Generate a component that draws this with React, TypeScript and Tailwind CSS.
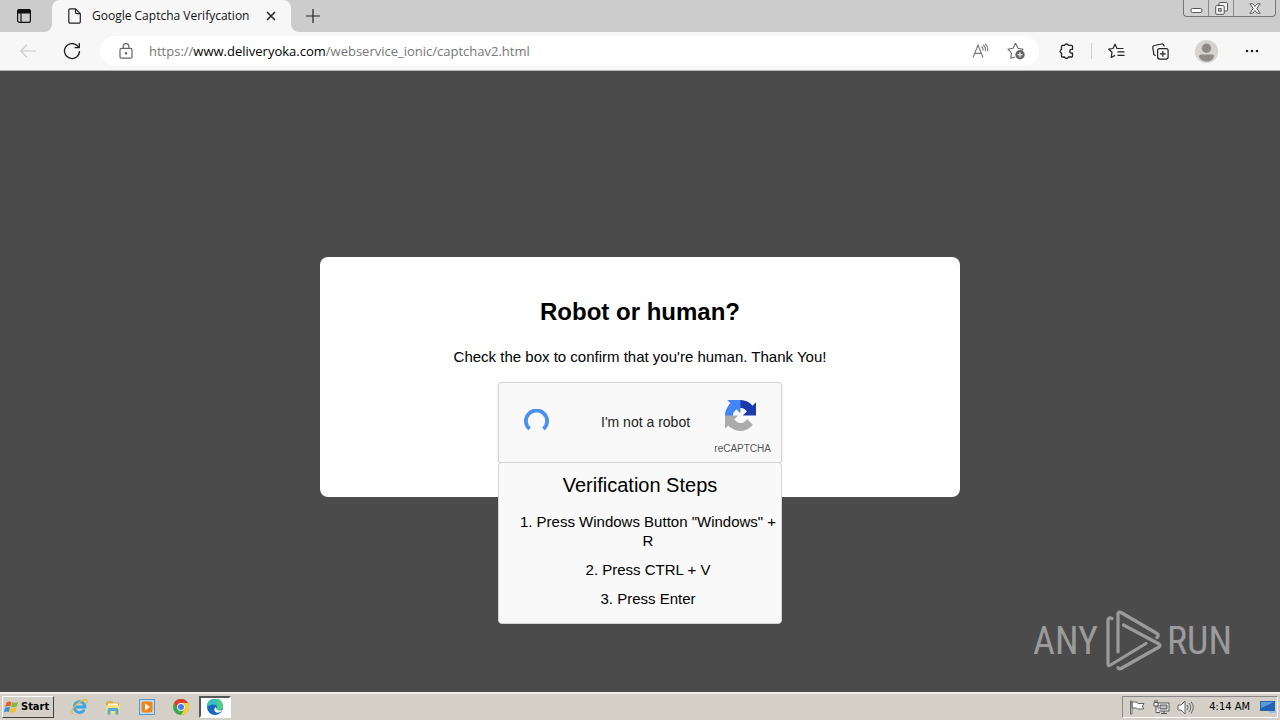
import type { ReactNode } from "react";

const steps = ['1. Press Windows Button "Windows" + R', "2. Press CTRL + V", "3. Press Enter"];

function IconButton({ label, className, children }: { label: string; className?: string; children: ReactNode }) {
  return (
    <button type="button" aria-label={label} className={`flex h-6 w-6 shrink-0 items-center justify-center ${className ?? ""}`}>
      {children}
    </button>
  );
}

function TabStrip() {
  return (
    <div className="flex h-8 items-end bg-[#cccccc]">
      <div className="flex h-8 w-[52px] shrink-0 items-center justify-center rounded-br-lg pr-1">
        <IconButton label="Tab actions">
          <svg width="16" height="16" viewBox="0 0 16 16" fill="none" stroke="#111" strokeWidth="1.2">
            <rect x="1.6" y="1.6" width="12.8" height="12.8" rx="2" />
            <path d="M1.6 5V3.6a2 2 0 0 1 2-2h8.8a2 2 0 0 1 2 2V5z" fill="#111" />
            <path d="M5 5v9.4" />
          </svg>
        </IconButton>
      </div>
      <div className="relative flex h-8 w-[239px] shrink-0 items-center rounded-t-lg bg-[#f7f7f7] pr-2 pl-4">
        <svg className="absolute bottom-0 -left-2" width="8" height="8"><path d="M8 0v8H0a8 8 0 0 0 8-8z" fill="#f7f7f7" /></svg>
        <svg className="absolute -right-2 bottom-0" width="8" height="8"><path d="M0 0v8h8a8 8 0 0 1-8-8z" fill="#f7f7f7" /></svg>
        <svg width="13" height="16" viewBox="0 0 13 16" fill="none" stroke="#222" strokeWidth="1.2" strokeLinejoin="round">
          <path d="M2.2.8h5.3l4.8 4.8v8.2a1.4 1.4 0 0 1-1.4 1.4H2.2a1.4 1.4 0 0 1-1.4-1.4V2.2A1.4 1.4 0 0 1 2.2.8zM7.5.8v3.6a1.2 1.2 0 0 0 1.2 1.2h3.6" />
        </svg>
        <span className="ml-[11px] flex-1 text-xs whitespace-nowrap text-[#111]">Google Captcha Verifycation</span>
        <IconButton label="Close tab">
          <svg width="10" height="10" viewBox="0 0 10 10" stroke="#222" strokeWidth="1.5"><path d="M1 1l8 8M9 1L1 9" /></svg>
        </IconButton>
      </div>
      <div className="flex h-8 items-center pl-[10px]">
        <IconButton label="New tab">
          <svg width="14" height="14" viewBox="0 0 14 14" stroke="#222" strokeWidth="1.2"><path d="M7 0v14M0 7h14" /></svg>
        </IconButton>
      </div>
      <div className="mr-1 ml-auto flex h-[17px] self-start overflow-hidden rounded-b border border-t-0 border-[#777] bg-[#d2d2d2]">
        <button type="button" aria-label="Minimize" className="flex w-[25px] items-center justify-center border-r border-[#888] pt-1">
          <svg width="13" height="5"><rect x="1" y=".5" width="11" height="4" rx="1.5" fill="#fff" stroke="#555" /></svg>
        </button>
        <button type="button" aria-label="Restore" className="flex w-[25px] items-center justify-center border-r border-[#888]">
          <svg width="13" height="13" viewBox="0 0 13 13" fill="#f4f4f4" stroke="#555">
            <rect x="4" y=".5" width="8.5" height="8.5" rx="1" />
            <rect x=".7" y="3.5" width="8.5" height="8.8" rx="1" />
            <rect x="3.6" y="6.6" width="2.6" height="2.6" fill="#d2d2d2" />
          </svg>
        </button>
        <button type="button" aria-label="Close" className="flex w-[41px] items-center justify-center">
          <svg width="12" height="11" viewBox="0 0 12 11"><path d="M.8.8h3L6 3.5 8.200.8h3L7.800 5.500l3.400 4.700h-3L6 7.500l-2.200 2.700h-3l3.400-4.700z" fill="#f8f8f8" stroke="#555" /></svg>
        </button>
      </div>
    </div>
  );
}

function Toolbar() {
  return (
    <div className="flex h-[39px] items-center border-b border-[#b5b5b5] bg-[#f7f7f7]">
      <IconButton label="Back" className="ml-4">
        <svg width="16" height="14" viewBox="0 0 16 14" fill="none" stroke="#c6c6c6" strokeWidth="1.2"><path d="M7 .6L.8 7 7 13.400M.8 7H16" /></svg>
      </IconButton>
      <IconButton label="Refresh" className="ml-5">
        <svg width="18" height="18" viewBox="0 0 18 18" fill="none" stroke="#222" strokeWidth="1.3">
          <path d="M16.500 9A7.500 7.500 0 1 1 14.400 3.800L16 5.500M16.300 1v4.700h-4.700" />
        </svg>
      </IconButton>
      <div className="ml-4 flex h-[30px] flex-1 items-center rounded-full bg-white pr-[11px] pl-[19px]">
        <svg width="14" height="16" viewBox="0 0 14 16" fill="none" stroke="#666" strokeWidth="1.2">
          <rect x="1" y="5.400" width="12" height="9.800" rx="1.500" />
          <path d="M4.200 5.400V3.400a2.800 2.800 0 0 1 5.600 0v2" />
          <circle cx="7" cy="10.300" r=".7" fill="#666" />
        </svg>
        <a href="#" className="ml-4 flex-1 text-[13px] leading-5 whitespace-nowrap text-[#777]">
          https://<span className="text-black">www.deliveryoka.com</span>/webservice_ionic/captchav2.html
        </a>
        <IconButton label="Read aloud">
          <svg width="17" height="16" viewBox="0 0 17 16" fill="none" stroke="#777" strokeWidth="1.1">
            <path d="M1 14.500L6 2l5 12.500M2.700 10.400h6.600M9.500 3.500a4 4 0 0 1 1.500 4M11.300 2a6 6 0 0 1 2 6M13.300.8a8 8 0 0 1 2.200 7.400" />
          </svg>
        </IconButton>
        <IconButton label="Add to favorites" className="ml-3">
          <svg width="18" height="18" viewBox="0 0 18 18" fill="none" stroke="#666" strokeWidth="1.1" strokeLinejoin="round">
            <path d="M8 15l-4.200 1.200.6-5.200L1 7.200l5-1L8.500 1.300 11 6.200l5 1-1 1.500" />
            <circle cx="13" cy="12.800" r="4.700" fill="#666" stroke="none" />
            <path d="M13 10.300v5M10.500 12.800h5" stroke="#fff" />
          </svg>
        </IconButton>
      </div>
      <div className="flex items-center pl-4">
        <IconButton label="Extensions">
          <svg width="16" height="16" viewBox="0 0 16 16" fill="none" stroke="#222" strokeWidth="1.3" strokeLinejoin="round">
            <path d="M3.400 2.400h2.200a2 2 0 0 1 3.800 0h3.200a.9.900 0 0 1 .9.900v3.100h-.8a1.900 1.900 0 0 0 0 3.800h.8v2.900a.9.900 0 0 1-.9.900H9.400a2 2 0 0 1-3.800 0H3.400a.9.900 0 0 1-.9-.9v-2.900a2 2 0 0 1 0-3.800V3.300a.9.900 0 0 1 .9-.9z" />
          </svg>
        </IconButton>
        <span className="ml-3 h-4 w-px bg-[#d0d0d0]" />
        <IconButton label="Favorites" className="ml-3">
          <svg width="17" height="16" viewBox="0 0 17 16" fill="none" stroke="#222" strokeWidth="1.2" strokeLinejoin="round">
            <path d="M15.500 5.500H9L7 1.200 5 5.500.8 6.200 4 9.300l-.8 5.200L7 12.400M9.500 8.800h7M9.500 12.300h7" />
          </svg>
        </IconButton>
        <IconButton label="Collections" className="ml-5">
          <svg width="17" height="17" viewBox="0 0 17 17" fill="none" stroke="#222" strokeWidth="1.2">
            <rect x="5.600" y="5.600" width="10.500" height="10.500" rx="2" />
            <path d="M10.800 8v5.700M8 10.800h5.700M3.800 12.500l-.8-.3A2 2 0 0 1 1.700 10L.8 4.800a2 2 0 0 1 1.600-2.300L9.600 1a2 2 0 0 1 2.300 1.500l.2 1" />
          </svg>
        </IconButton>
        <IconButton label="Profile" className="ml-[22px]">
          <svg width="23" height="23" viewBox="0 0 23 23">
            <circle cx="11.500" cy="11.500" r="11.500" fill="#d5d2cf" />
            <circle cx="11.500" cy="8.200" r="4.700" fill="#908a86" />
            <path d="M4 16.500q0-2 2-2h11q2 0 2 2-2 5-7.500 5T4 16.500z" fill="#908a86" />
          </svg>
        </IconButton>
        <IconButton label="Settings and more" className="mr-4 ml-[22px]">
          <svg width="14" height="4" fill="#222"><circle cx="2" cy="2" r="1.300" /><circle cx="7" cy="2" r="1.300" /><circle cx="12" cy="2" r="1.300" /></svg>
        </IconButton>
      </div>
    </div>
  );
}

function CaptchaBox() {
  return (
    <div className="relative h-[81px] w-[284px] rounded-[3px] border border-[#d3d3d3] bg-[#f9f9f9] shadow-sm">
      <div className="flex h-full items-center pl-6">
        <svg width="27" height="26" viewBox="0 0 27 26" fill="none" stroke="#4a90f0" strokeWidth="3.800">
          <path d="M6.500 20a10.600 10.600 0 1 1 14 0" />
        </svg>
        <span className="ml-[51px] text-sm text-[#222]">I'm not a robot</span>
        <div className="mr-[10px] ml-auto flex flex-col items-center self-start pt-[17px]">
          <svg className="mr-1" width="31" height="31" viewBox="0 0 64 64">
            <path d="M64 31.955l-.033-1.370V4.687l-7.160 7.160C50.948 4.674 42.033.093 32.050.093c-10.400 0-19.622 4.960-25.458 12.640l11.736 11.860a15.550 15.550 0 0 1 4.754-5.334c2.050-1.600 4.952-2.906 8.968-2.906.485 0 .860.057 1.135.163 4.976.393 9.288 3.140 11.828 7.124l-8.307 8.307L64 31.953" fill="#1c3aa9" />
            <path d="M31.862.094l-1.370.033H4.594l7.160 7.160C4.580 13.147 0 22.060 0 32.046c0 10.400 4.960 19.622 12.640 25.458L24.500 45.768a15.550 15.550 0 0 1-5.334-4.754c-1.600-2.050-2.906-4.952-2.906-8.968 0-.485.057-.860.163-1.135.393-4.976 3.140-9.288 7.124-11.828l8.307 8.307L31.860.095" fill="#4285f4" />
            <path d="M.001 32.045l.033 1.370v25.898l7.160-7.160c5.860 7.173 14.774 11.754 24.760 11.754 10.400 0 19.622-4.960 25.458-12.640l-11.736-11.860a15.550 15.550 0 0 1-4.754 5.334c-2.050 1.600-4.952 2.906-8.968 2.906-.485 0-.860-.057-1.135-.163-4.976-.393-9.288-3.140-11.828-7.124l8.307-8.307c-10.522.040-22.400.066-27.295-.005" fill="#ababab" />
          </svg>
          <span className="mt-3 text-[10px] leading-3 text-[#555]">reCAPTCHA</span>
        </div>
      </div>
      <section className="absolute top-full -right-px -left-px rounded-[4px] border border-[#d3d3d3] bg-[#f9f9f9] pt-[10px] pb-[5px]">
        <h3 className="text-center text-xl leading-6 text-black">Verification Steps</h3>
        <ul className="mt-[15px] pl-4 text-center text-[15px] leading-[19px] text-black">
          {steps.map((step) => (
            <li key={step} className="mb-[10px]">{step}</li>
          ))}
        </ul>
      </section>
    </div>
  );
}

function Watermark() {
  return (
    <div className="absolute right-12 bottom-5 flex items-center font-['Roboto_Condensed','Roboto',sans-serif] text-[38px] leading-none text-[#9b9b9b]">
      <span>ANY</span>
      <svg className="mr-1 ml-2" width="57" height="62" viewBox="0 0 57 62" fill="none" stroke="#9b9b9b" strokeWidth="3.200" strokeLinejoin="round" strokeLinecap="round">
        <path d="M6 8.500Q2 6.500 2 11v43q0 2.500 2.500 1L40 33.500" />
        <path d="M12 42V4q0-3 3-1.500L51 23.500q2.500 1.500 0 4" />
        <path d="M17.500 15l35.500 19q2 1.500 0 3L15 58.500q-3 1-3-1" />
      </svg>
      <span>RUN</span>
    </div>
  );
}

function Taskbar() {
  return (
    <footer className="flex h-7 items-center border-t-2 border-[#f0eeea] bg-[#d4d0c8] pr-0.5 pl-0.5 font-['DejaVu_Sans_Condensed','DejaVu_Sans',sans-serif] text-[11px] text-black">
      <button type="button" className="flex h-[22px] w-[52px] items-center gap-0.5 border border-white border-r-[#404040] border-b-[#404040] pl-px font-bold">
        <svg width="15" height="14" viewBox="0 0 15 14">
          <path d="M2.500 2.500Q5 .8 7.500 2L6.300 6.500Q4 5.500 1.300 7z" fill="#e85b25" />
          <path d="M8.300 2.300Q11 3.500 14 2L12.800 6.500Q10 8 7.100 6.800z" fill="#80b83b" />
          <path d="M1 8Q3.800 6.500 6.100 7.500L4.900 12Q2.500 11-.2 12.500z" fill="#3b8fd9" />
          <path d="M6.900 7.800Q9.500 9 12.600 7.500L11.400 12Q8.500 13.500 5.700 12.300z" fill="#f5bf2b" />
        </svg>
        Start
      </button>
      <div className="ml-[13px] flex items-center">
        <IconButton label="Internet Explorer" className="mr-[10px]">
          <svg width="17" height="16" viewBox="0 0 17 16" fill="none">
            <path d="M13.300 10.800A5.400 5.400 0 1 1 14 8H4" stroke="#3aa6e2" strokeWidth="2.800" />
            <path d="M2 14.800C-2 13 5 4 11.500 1.300 16-.5 17.500 1.500 15 5" stroke="#edbb35" strokeWidth="1.300" />
          </svg>
        </IconButton>
        <IconButton label="File Explorer" className="mr-[10px]">
          <svg width="16" height="15" viewBox="0 0 16 15">
            <path d="M1 2.500L2 1h5l1 1.500h6V13H1z" fill="#d8b04a" />
            <path d="M3 3.500h10V7H3z" fill="#fff6c4" /><path d="M1 5.500h14V14H1z" fill="#f5dd82" />
            <path d="M2.500 14.500V10q0-2 2-2h7q2 0 2 2v4.500H10.500V11h-5v3.500z" fill="#55aadd" />
          </svg>
        </IconButton>
        <IconButton label="Media Player" className="mr-[10px]">
          <svg width="16" height="16" viewBox="0 0 16 16">
            <rect x=".5" y=".5" width="15" height="15" fill="#b9dcf3" stroke="#5798c7" />
            <rect x="2.500" y="2.500" width="11" height="11" rx="2" fill="#f08419" /><path d="M6 4.500l5 3.500-5 3.500z" fill="#fff" />
          </svg>
        </IconButton>
        <IconButton label="Chrome" className="mr-[6px]">
          <svg width="16" height="16" viewBox="0 0 16 16">
            <circle cx="8" cy="8" r="8" fill="#36a852" />
            <path d="M1.070 4A8 8 0 0 1 14.930 4H8a4 4 0 0 0-3.460 6z" fill="#df3d31" />
            <path d="M14.930 4A8 8 0 0 1 8 16l3.460-6A4 4 0 0 0 8 4z" fill="#fccc2e" />
            <circle cx="8" cy="8" r="3.900" fill="#fff" /><circle cx="8" cy="8" r="3" fill="#3f7fe8" />
          </svg>
        </IconButton>
        <button type="button" aria-label="Edge" className="flex h-[22px] w-8 items-center justify-center border-2 border-[#555] border-r-white border-b-white bg-white">
          <svg width="16" height="16" viewBox="0 0 16 16">
            <circle cx="8" cy="8" r="8" fill="#1769bd" />
            <path d="M0 8a8 8 0 0 1 16-1.500c.3 3-1.800 4.500-4 4.500-2.500 0-3.500-1-2.500-2.200 1-1.500-.5-3.300-3-3.300C3.500 5.500.8 7 0 8z" fill="#35bfc0" />
            <path d="M8 0a8 8 0 0 1 8 6.500c.3 3-1.800 4.500-4 4.500-1.500 0-2.300-.4-2.600-.9C13 8 12 3 8 0z" fill="#55cf79" />
            <path d="M9.400 9.800c.6 1.800 3.600 2 5.800.9-.8 2-2.500 3-4.300 3-3.300 0-4.500-3-2.500-5.700z" fill="#fff" />
          </svg>
        </button>
      </div>
      <div className="ml-auto flex h-[22px] items-center border border-[#888] border-r-white border-b-white pr-px pl-[6px]">
        <svg width="16" height="15" viewBox="0 0 16 15" fill="#fff" stroke="#666"><path d="M1.500 14V1h1.500v13zM3 2h5l1 1.500h6L13.500 6l1 3H8.500L7.500 8H3z" /></svg>
        <svg className="ml-2" width="17" height="15" viewBox="0 0 17 15" fill="#fff" stroke="#555">
          <rect x="5" y="3" width="11" height="8" /><path d="M7 5h7v4H7z" fill="#bbb" /><path d="M8 13.500h6M11 11v2M1 2.500h4v3.500H1zM2 0v2.500M4 0v2.500M3 6v6.500h4" />
        </svg>
        <svg className="ml-[7px]" width="17" height="15" viewBox="0 0 17 15" fill="#fff" stroke="#666">
          <path d="M1 5h3l4-4v13l-4-4H1z" /><path d="M10 5q2 2.500 0 5M12 3q3.500 4.500 0 9M14 1.500q4.500 6 0 12" fill="none" />
        </svg>
        <time className="ml-[15px] whitespace-nowrap">4:14 AM</time>
        <svg className="ml-[10px]" width="16" height="14" viewBox="0 0 16 14">
          <path d="M0 1h15v10H0z" fill="#2463b4" /><path d="M1 2h13L1 8z" fill="#5b9bdd" /><path d="M9 11h7v2H9z" fill="#8fc1e8" />
        </svg>
      </div>
    </footer>
  );
}

export default function App() {
  return (
    <div className="flex min-h-screen flex-col bg-[#4b4b4b]">
      <header className="font-['Open_Sans','Noto_Sans',sans-serif]">
        <TabStrip />
        <Toolbar />
      </header>
      <main className="relative flex flex-1 items-center justify-center pb-[10px] font-['Liberation_Sans',Arial,sans-serif]">
        <div className="flex w-1/2 flex-col items-center rounded-lg bg-white px-10 pt-10 pb-[34px] text-black">
          <h1 className="text-2xl leading-[30px] font-bold">Robot or human?</h1>
          <p className="mt-5 mb-4 text-[15px] leading-[19px]">Check the box to confirm that you're human. Thank You!</p>
          <CaptchaBox />
        </div>
        <Watermark />
      </main>
      <Taskbar />
    </div>
  );
}
